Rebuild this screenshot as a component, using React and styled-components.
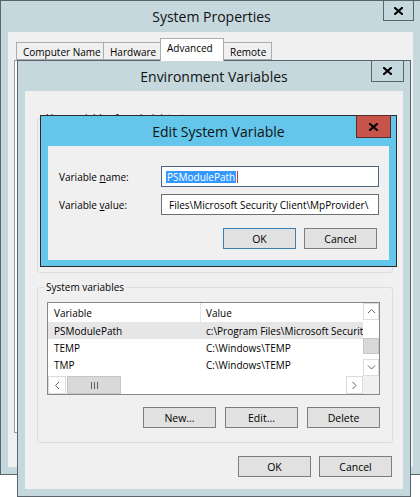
import React from "react";
import styled, { createGlobalStyle } from "styled-components";

const GlobalStyle = createGlobalStyle`
  html, body {
    margin: 0;
    padding: 0;
    background: #ffffff;
  }
  body {
    font-family: "Open Sans", "Noto Sans", sans-serif;
    font-size: 10px;
    color: #000;
  }
`;

const Desktop = styled.div`
  position: relative;
  width: 420px;
  height: 497px;
  overflow: hidden;
  background: #ffffff;
`;

const Window = styled.div`
  position: absolute;
  box-sizing: border-box;
  display: flex;
  flex-direction: column;
  left: ${(p) => p.$left}px;
  top: ${(p) => p.$top}px;
  width: ${(p) => p.$width}px;
  height: ${(p) => p.$height}px;
  background: ${(p) => (p.$active ? "#63c6ea" : "#c5d8de")};
  border: 1px solid ${(p) => (p.$active ? "#2b2b2b" : "#5b646d")};
  padding: ${(p) => p.$pad};
`;

const TitleBar = styled.div`
  position: relative;
  flex: 0 0 ${(p) => p.$h}px;
  display: flex;
  align-items: center;
  justify-content: center;
  font-size: 14px;
  color: #111;
  margin: 0 ${(p) => p.$shift || 0}px 0 0;
`;

const CloseButton = styled.div`
  position: absolute;
  top: -1px;
  right: ${(p) => p.$right}px;
  width: ${(p) => p.$w}px;
  height: ${(p) => p.$h}px;
  box-sizing: border-box;
  border: 1px solid ${(p) => (p.$red ? "#5c2c2a" : "#5b646d")};
  background: ${(p) => (p.$red ? "#c7544b" : "#c5d8de")};
  display: flex;
  align-items: center;
  justify-content: center;
`;

const Client = styled.div`
  flex: 1;
  background: #f0f0f0;
  display: flex;
  flex-direction: column;
  min-height: 0;
`;

/* ---------- tabs ---------- */

const TabStrip = styled.div`
  display: flex;
  align-items: flex-end;
  height: 28px;
  padding-left: 8px;
  position: relative;
  z-index: 1;
`;

const Tab = styled.div`
  box-sizing: border-box;
  width: ${(p) => p.$w}px;
  height: ${(p) => (p.$selected ? 23 : 18)}px;
  margin-bottom: ${(p) => (p.$selected ? -1 : 0)}px;
  margin-left: ${(p) => (p.$first ? 0 : -1)}px;
  border: 1px solid #acacac;
  border-bottom: ${(p) => (p.$selected ? "none" : "1px solid #acacac")};
  background: ${(p) => (p.$selected ? "#ffffff" : "#f0f0f0")};
  padding: 2px 0 0 6px;
  white-space: nowrap;
  font-size: 10px;
`;

const TabPane = styled.div`
  margin: 0 7px 0 6px;
  height: 371px;
  border: 1px solid #9a9a9a;
  background: #ffffff;
`;

/* ---------- group boxes ---------- */

const GroupBox = styled.fieldset`
  margin: ${(p) => p.$mt}px 10px 0 12px;
  padding: ${(p) => p.$pad};
  border: 1px solid #dcdcdc;
  border-radius: 3px;
  height: ${(p) => p.$h}px;
  box-sizing: border-box;
  display: flex;
  flex-direction: column;
  min-width: 0;
`;

const GroupLabel = styled.legend`
  margin-left: -3px;
  padding: 0 2px;
  line-height: 14px;
  font-size: 10px;
`;

/* ---------- list view ---------- */

const ListView = styled.div`
  display: grid;
  grid-template-columns: 1fr 16px;
  grid-template-rows: 73px 18px;
  height: 93px;
  box-sizing: border-box;
  border: 1px solid #828790;
  background: #ffffff;
`;

const ListBody = styled.div`
  overflow: hidden;
  white-space: nowrap;
`;

const ListRow = styled.div`
  display: grid;
  grid-template-columns: 152px 1fr;
  height: ${(p) => (p.$header ? 19 : 17)}px;
  align-items: center;
  background: ${(p) => (p.$selected ? "#e6e6e6" : "#ffffff")};
  font-size: 10px;
`;

const Cell = styled.div`
  padding-left: ${(p) => (p.$divider ? 5 : 6)}px;
  height: 100%;
  display: flex;
  align-items: center;
  overflow: hidden;
  border-left: ${(p) => (p.$divider ? "1px solid #e5e5e5" : "none")};
`;

const VScroll = styled.div`
  display: flex;
  flex-direction: column;
  background: #ffffff;
`;

const HScroll = styled.div`
  display: flex;
  background: #ffffff;
`;

const ArrowBox = styled.div`
  box-sizing: border-box;
  flex: 0 0 ${(p) => p.$size}px;
  border: 1px solid #dcdcdc;
  background: #ffffff;
  display: flex;
  align-items: center;
  justify-content: center;
`;

const Track = styled.div`
  flex: 1;
  display: flex;
  flex-direction: ${(p) => (p.$vertical ? "column" : "row")};
`;

const Thumb = styled.div`
  box-sizing: border-box;
  background: #d9d9d9;
  border: 1px solid #c6c6c6;
  ${(p) =>
    p.$vertical
      ? "margin-top: 18px; height: 16px;"
      : "margin-left: 1px; width: 54px;"}
  display: flex;
  align-items: center;
  justify-content: center;
`;

const Corner = styled.div`
  background: #f0f0f0;
`;

/* ---------- buttons / inputs ---------- */

const ButtonRow = styled.div`
  display: flex;
  justify-content: flex-end;
  gap: ${(p) => p.$gap || 8}px;
  margin: ${(p) => p.$margin};
`;

const Button = styled.div`
  box-sizing: border-box;
  width: 73px;
  height: 21px;
  background: #e1e1e1;
  border: 1px solid ${(p) => (p.$default ? "#3c7fb1" : "#7d7d7d")};
  display: flex;
  align-items: center;
  justify-content: center;
  font-size: 10.5px;
`;

const FieldGrid = styled.div`
  display: grid;
  grid-template-columns: 102px 218px;
  row-gap: 7px;
  padding: 20px 0 0 11px;
  align-items: center;
`;

const FieldLabel = styled.div`
  font-size: 10px;
`;

const TextBox = styled.div`
  box-sizing: border-box;
  height: 21px;
  border: 1px solid ${(p) => (p.$focused ? "#4c6585" : "#6f6f6f")};
  background: #ffffff;
  display: flex;
  align-items: center;
  padding-left: ${(p) => (p.$focused ? 4 : 7)}px;
  white-space: nowrap;
  overflow: hidden;
  font-size: 10px;
`;

const Selection = styled.span`
  background: #3399ff;
  color: #ffffff;
  padding: 0 1px;
  line-height: 12px;
`;

const Caret = styled.span`
  display: inline-block;
  width: 1px;
  height: 12px;
  margin-left: 1px;
  background: #c0392b;
`;

const CloseGlyph = () => (
  <svg width="9" height="8" viewBox="0 0 9 8">
    <path d="M1 1 L8 7 M8 1 L1 7" stroke="#000" strokeWidth="2.2" strokeLinecap="square" fill="none" />
  </svg>
);

const Chevron = ({ dir }) => {
  const paths = {
    up: "M1 5 L4.5 1.5 L8 5",
    down: "M1 1.5 L4.5 5 L8 1.5",
    left: "M5 1 L1.5 4.5 L5 8",
    right: "M1.5 1 L5 4.5 L1.5 8",
  };
  const vertical = dir === "up" || dir === "down";
  return (
    <svg width={vertical ? 9 : 7} height={vertical ? 7 : 9} viewBox={vertical ? "0 0 9 7" : "0 0 7 9"}>
      <path d={paths[dir]} stroke="#606060" strokeWidth="1" fill="none" />
    </svg>
  );
};

const Grip = () => (
  <svg width="7" height="7" viewBox="0 0 7 7">
    <path d="M0.5 0 V7 M3.5 0 V7 M6.5 0 V7" stroke="#606060" strokeWidth="1" />
  </svg>
);

const systemVars = [
  { name: "PSModulePath", value: "c:\\Program Files\\Microsoft Security Client\\MpProvider\\", selected: true },
  { name: "TEMP", value: "C:\\Windows\\TEMP" },
  { name: "TMP", value: "C:\\Windows\\TEMP" },
];

const tabs = [
  { label: "Computer Name", w: 88 },
  { label: "Hardware", w: 58 },
  { label: "Advanced", w: 64, selected: true },
  { label: "Remote", w: 49 },
];

const App = () => {
  return (
    <>
      <GlobalStyle />
      <Desktop>
        {/* System Properties */}
        <Window $left={0} $top={0} $width={424} $height={475} $pad="0 10px 7px 7px">
          <TitleBar $h={31} $shift={-2}>
            System Properties
            <CloseButton $right={1} $w={31} $h={21}>
              <CloseGlyph />
            </CloseButton>
          </TitleBar>
          <Client>
            <TabStrip>
              {tabs.map((t, i) => (
                <Tab key={t.label} $w={t.w} $first={i === 0} $selected={t.selected}>
                  {t.label}
                </Tab>
              ))}
            </TabStrip>
            <TabPane />
          </Client>
        </Window>

        {/* Environment Variables */}
        <Window $left={17} $top={60} $width={394} $height={437} $pad="0 7px 7px 7px">
          <TitleBar $h={30}>
            Environment Variables
            <CloseButton $right={-1} $w={33} $h={22}>
              <CloseGlyph />
            </CloseButton>
          </TitleBar>
          <Client>
            <GroupBox $mt={20} $h={162} $pad="0 9px">
              <GroupLabel>User variables for administrator</GroupLabel>
            </GroupBox>
            <GroupBox $mt={7} $h={163} $pad="8px 12px 13px 9px">
              <GroupLabel>System variables</GroupLabel>
              <ListView>
                <ListBody>
                  <ListRow $header>
                    <Cell>Variable</Cell>
                    <Cell $divider>Value</Cell>
                  </ListRow>
                  {systemVars.map((v) => (
                    <ListRow key={v.name} $selected={v.selected}>
                      <Cell>{v.name}</Cell>
                      <Cell>{v.value}</Cell>
                    </ListRow>
                  ))}
                </ListBody>
                <VScroll>
                  <ArrowBox $size={17}>
                    <Chevron dir="up" />
                  </ArrowBox>
                  <Track $vertical>
                    <Thumb $vertical />
                  </Track>
                  <ArrowBox $size={17}>
                    <Chevron dir="down" />
                  </ArrowBox>
                </VScroll>
                <HScroll>
                  <ArrowBox $size={18}>
                    <Chevron dir="left" />
                  </ArrowBox>
                  <Track>
                    <Thumb>
                      <Grip />
                    </Thumb>
                  </Track>
                  <ArrowBox $size={17}>
                    <Chevron dir="right" />
                  </ArrowBox>
                </HScroll>
                <Corner />
              </ListView>
              <ButtonRow $margin="12px 0 0 0" $gap={9}>
                <Button>New...</Button>
                <Button>Edit...</Button>
                <Button>Delete</Button>
              </ButtonRow>
            </GroupBox>
            <ButtonRow $margin="13px 11px 0 0" $gap={8}>
              <Button>OK</Button>
              <Button>Cancel</Button>
            </ButtonRow>
          </Client>
        </Window>

        {/* Edit System Variable */}
        <Window $left={40} $top={115} $width={357} $height={152} $pad="0 7px 6px 7px" $active>
          <TitleBar $h={30}>
            Edit System Variable
            <CloseButton $red $right={-2} $w={35} $h={23}>
              <CloseGlyph />
            </CloseButton>
          </TitleBar>
          <Client>
            <FieldGrid>
              <FieldLabel>
                Variable <u>n</u>ame:
              </FieldLabel>
              <TextBox $focused>
                <Selection>PSModulePath</Selection>
                <Caret />
              </TextBox>
              <FieldLabel>
                Variable <u>v</u>alue:
              </FieldLabel>
              <TextBox>Files\Microsoft Security Client\MpProvider\</TextBox>
            </FieldGrid>
            <ButtonRow $margin="13px 12px 0 0" $gap={8}>
              <Button $default>OK</Button>
              <Button>Cancel</Button>
            </ButtonRow>
          </Client>
        </Window>
      </Desktop>
    </>
  );
};

export default App;
